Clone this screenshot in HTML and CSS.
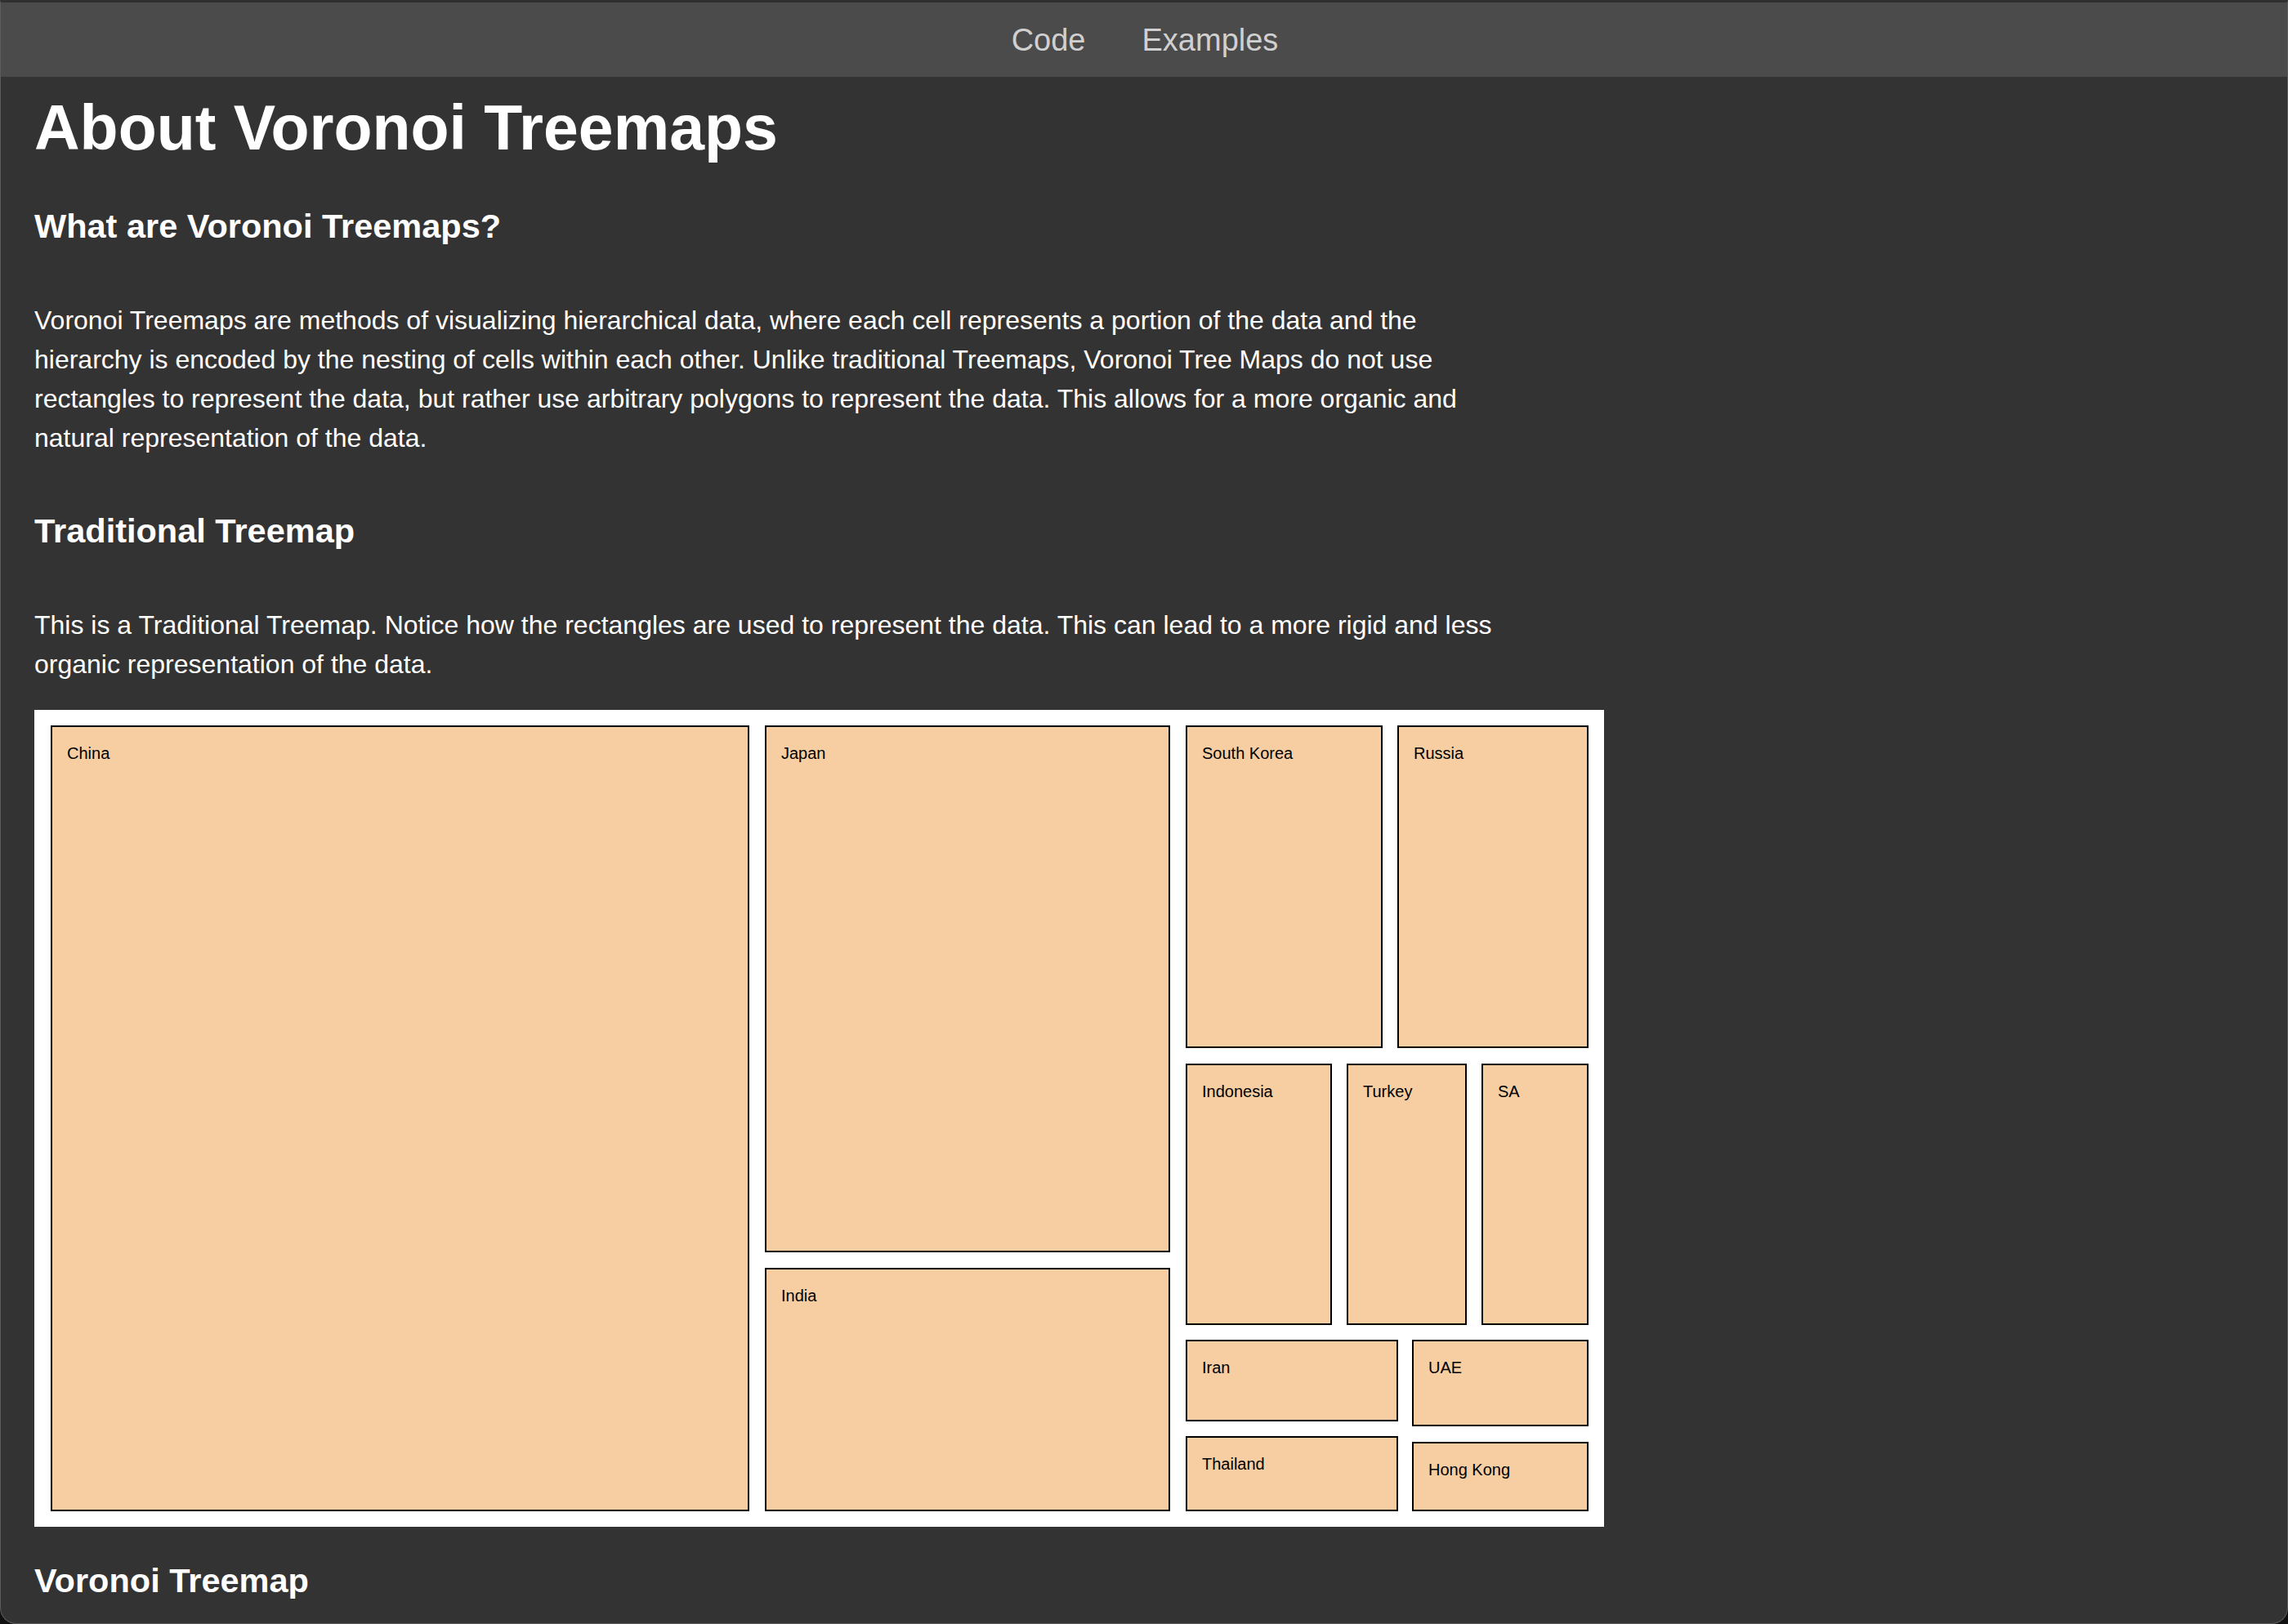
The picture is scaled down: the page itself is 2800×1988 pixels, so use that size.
FILE: index.html
```html
<!DOCTYPE html>
<html lang="en">
<head>
<meta charset="utf-8">
<title>About Voronoi Treemaps</title>
<link rel="stylesheet" href="styles.css">
</head>
<body>
<div class="window">
  <nav class="topnav">
    <a class="navlink" href="#">Code</a>
    <a class="navlink" href="#">Examples</a>
  </nav>
  <main class="content">
    <h1 class="title">About Voronoi Treemaps</h1>
    <h2 class="section">What are Voronoi Treemaps?</h2>
    <p class="text">Voronoi Treemaps are methods of visualizing hierarchical data, where each cell represents a portion of the data and the hierarchy is encoded by the nesting of cells within each other. Unlike traditional Treemaps, Voronoi Tree Maps do not use rectangles to represent the data, but rather use arbitrary polygons to represent the data. This allows for a more organic and natural representation of the data.</p>
    <h2 class="section">Traditional Treemap</h2>
    <p class="text text-tight">This is a Traditional Treemap. Notice how the rectangles are used to represent the data. This can lead to a more rigid and less organic representation of the data.</p>
    <div class="treemap">
      <svg class="treemap-svg" width="1921" height="1000" viewBox="0 0 1921 1000">
        <g class="cell"><rect x="21" y="20" width="853" height="960"/><text x="40" y="60">China</text></g>
        <g class="cell"><rect x="895" y="20" width="494" height="643"/><text x="914" y="60">Japan</text></g>
        <g class="cell"><rect x="895" y="684" width="494" height="296"/><text x="914" y="724">India</text></g>
        <g class="cell"><rect x="1410" y="20" width="239" height="393"/><text x="1429" y="60">South Korea</text></g>
        <g class="cell"><rect x="1669" y="20" width="232" height="393"/><text x="1688" y="60">Russia</text></g>
        <g class="cell"><rect x="1410" y="434" width="177" height="318"/><text x="1429" y="474">Indonesia</text></g>
        <g class="cell"><rect x="1607" y="434" width="145" height="318"/><text x="1626" y="474">Turkey</text></g>
        <g class="cell"><rect x="1772" y="434" width="129" height="318"/><text x="1791" y="474">SA</text></g>
        <g class="cell"><rect x="1410" y="772" width="258" height="98"/><text x="1429" y="812">Iran</text></g>
        <g class="cell"><rect x="1687" y="772" width="214" height="104"/><text x="1706" y="812">UAE</text></g>
        <g class="cell"><rect x="1410" y="890" width="258" height="90"/><text x="1429" y="930">Thailand</text></g>
        <g class="cell"><rect x="1687" y="897" width="214" height="83"/><text x="1706" y="937">Hong Kong</text></g>
      </svg>
    </div>
    <h2 class="section section-last">Voronoi Treemap</h2>
  </main>
</div>
</body>
</html>
```

FILE: styles.css
```css
html, body {
  margin: 0;
  padding: 0;
  background: #111111;
}

body {
  font-family: "Liberation Sans", Arial, Helvetica, sans-serif;
  color: #ffffff;
}

.window {
  box-sizing: border-box;
  width: 2800px;
  height: 1988px;
  background: #333333;
  border: 1px solid #5c5c5c;
  border-top: 3px solid #2f2f2f;
  border-radius: 0 0 20px 20px;
  overflow: hidden;
}

.topnav {
  height: 91px;
  background: #4b4b4b;
  display: flex;
  justify-content: center;
  align-items: center;
  gap: 69px;
  padding-left: 2px;
}

.navlink {
  color: #d0d0d0;
  text-decoration: none;
  font-size: 38px;
  line-height: 44px;
}

.content {
  padding: 0 0 0 41px;
}

.title {
  margin: 18px 0 53px;
  font-size: 77px;
  line-height: 88px;
  font-weight: bold;
}

.section {
  margin: 0 0 67px;
  font-size: 41.5px;
  line-height: 48px;
  font-weight: bold;
}

.section-last {
  margin-top: 42px;
}

.text {
  margin: 0 0 66px;
  max-width: 1800px;
  font-size: 32px;
  line-height: 48px;
}

.text-tight {
  margin-bottom: 32px;
}

.treemap {
  width: 1921px;
  height: 1000px;
  background: #ffffff;
}

.treemap-svg {
  display: block;
}

.cell rect {
  fill: #f6cea1;
  stroke: #000000;
  stroke-width: 2;
}

.cell text {
  font-family: "Liberation Sans", Arial, Helvetica, sans-serif;
  font-size: 20px;
  fill: #000000;
}
```
